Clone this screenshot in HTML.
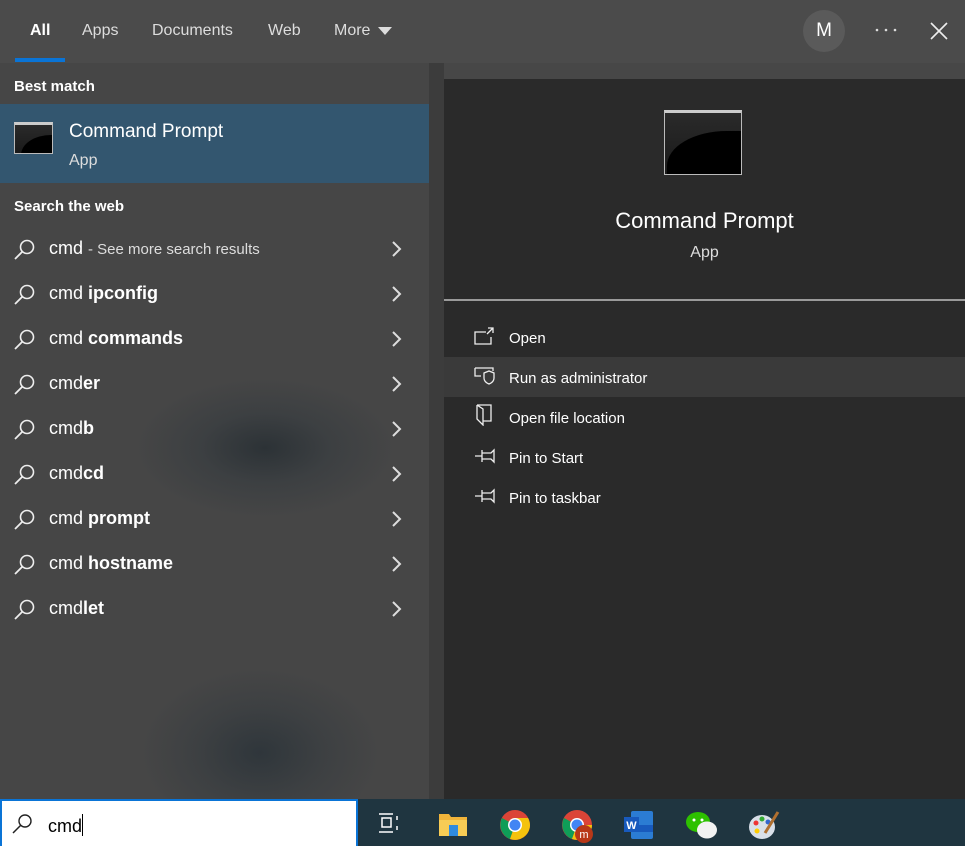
<!DOCTYPE html>
<html><head><meta charset="utf-8"><style>
*{margin:0;padding:0;box-sizing:border-box}
body{width:965px;height:846px;overflow:hidden;background:#474747;font-family:"Liberation Sans","DejaVu Sans",sans-serif;color:#fff;position:relative}
.abs{position:absolute}
.hdr{left:0;top:0;width:965px;height:63px;background:#4b4b4b}
.tab{position:absolute;top:22px;font-size:16px;color:#ddd}
.left{left:0;top:63px;width:429px;height:736px;background:radial-gradient(ellipse 130px 70px at 265px 385px,#2c3236 0%,rgba(58,62,65,0.8) 50%,rgba(71,71,71,0) 100%),radial-gradient(ellipse 120px 85px at 260px 690px,#2f363b 0%,rgba(58,62,65,0.7) 55%,rgba(71,71,71,0) 100%),#464646}
.gap{left:429px;top:63px;width:15px;height:736px;background:#3c3c3c}
.right{left:444px;top:79px;width:521px;height:720px;background:#2a2a2a}
.sec{font-size:15px;font-weight:bold;color:#fff}
.row{position:absolute;left:0;width:429px;height:45px;font-size:18px;color:#fff}
.row .t{position:absolute;left:49px;top:12px}
.row .t small{font-size:15px;color:#ddd}
.row svg.s{position:absolute;left:13px;top:12px}
.row svg.c{position:absolute;left:391px;top:15px}
.menu{position:absolute;left:444px;width:521px;height:40px;font-size:15px;color:#fff}
.menu .t{position:absolute;left:65px;top:13px}
.menu svg{position:absolute;left:30px;top:10px}
.cmdicon{background:linear-gradient(#2a2a2a,#1a1a1a);border:1px solid #bbb;border-top:3px solid #ccc;overflow:hidden}
</style></head><body>
<div class="abs hdr"></div>
<div class="tab" style="left:30px;color:#fff;font-weight:bold">All</div>
<div class="abs" style="left:15px;top:58px;width:50px;height:4px;background:#0a74d6"></div>
<div class="tab" style="left:82px">Apps</div>
<div class="tab" style="left:152px">Documents</div>
<div class="tab" style="left:268px">Web</div>
<div class="tab" style="left:334px">More</div>
<svg class="abs" style="left:377px;top:26px" width="16" height="10"><path d="M1 1h14L8 9z" fill="#ddd"/></svg>
<div class="abs" style="left:803px;top:10px;width:42px;height:42px;border-radius:50%;background:#5a5a5a;text-align:center;line-height:42px;font-size:19px">M</div>
<svg class="abs" style="left:875px;top:28px" width="22" height="4"><circle cx="2" cy="2" r="1.3" fill="#ddd"/><circle cx="11" cy="2" r="1.3" fill="#ddd"/><circle cx="20" cy="2" r="1.3" fill="#ddd"/></svg>
<svg class="abs" style="left:930px;top:22px" width="18" height="18"><path d="M1 1L17 17M17 1L1 17" stroke="#eee" stroke-width="1.6"/></svg>

<div class="abs left"></div>
<div class="abs gap"></div>
<div class="abs right"></div>

<div class="abs sec" style="left:14px;top:78px">Best match</div>
<div class="abs" style="left:0;top:104px;width:429px;height:79px;background:#33566f"></div>
<div class="abs cmdicon" style="left:14px;top:122px;width:39px;height:32px"><div style="position:absolute;left:6px;top:10px;width:60px;height:40px;border-radius:50% 0 0 0;background:#000"></div></div>
<div class="abs" style="left:69px;top:121px;font-size:19px">Command Prompt</div>
<div class="abs" style="left:69px;top:152px;font-size:16px;color:#ddd">App</div>
<div class="abs sec" style="left:14px;top:198px">Search the web</div>

<div class="row" style="top:226px"><svg class="s" width="24" height="24"><circle cx="14" cy="9" r="6.5" fill="none" stroke="#eee" stroke-width="1.6"/><path d="M9.5 13.5L2 21" stroke="#eee" stroke-width="1.8"/></svg><span class="t">cmd <small>- See more search results</small></span><svg class="c" width="12" height="16"><path d="M2 1l7 7-7 7" fill="none" stroke="#ddd" stroke-width="2"/></svg></div>
<div class="row" style="top:271px"><svg class="s" width="24" height="24"><circle cx="14" cy="9" r="6.5" fill="none" stroke="#eee" stroke-width="1.6"/><path d="M9.5 13.5L2 21" stroke="#eee" stroke-width="1.8"/></svg><span class="t">cmd <b>ipconfig</b></span><svg class="c" width="12" height="16"><path d="M2 1l7 7-7 7" fill="none" stroke="#ddd" stroke-width="2"/></svg></div>
<div class="row" style="top:316px"><svg class="s" width="24" height="24"><circle cx="14" cy="9" r="6.5" fill="none" stroke="#eee" stroke-width="1.6"/><path d="M9.5 13.5L2 21" stroke="#eee" stroke-width="1.8"/></svg><span class="t">cmd <b>commands</b></span><svg class="c" width="12" height="16"><path d="M2 1l7 7-7 7" fill="none" stroke="#ddd" stroke-width="2"/></svg></div>
<div class="row" style="top:361px"><svg class="s" width="24" height="24"><circle cx="14" cy="9" r="6.5" fill="none" stroke="#eee" stroke-width="1.6"/><path d="M9.5 13.5L2 21" stroke="#eee" stroke-width="1.8"/></svg><span class="t">cmd<b>er</b></span><svg class="c" width="12" height="16"><path d="M2 1l7 7-7 7" fill="none" stroke="#ddd" stroke-width="2"/></svg></div>
<div class="row" style="top:406px"><svg class="s" width="24" height="24"><circle cx="14" cy="9" r="6.5" fill="none" stroke="#eee" stroke-width="1.6"/><path d="M9.5 13.5L2 21" stroke="#eee" stroke-width="1.8"/></svg><span class="t">cmd<b>b</b></span><svg class="c" width="12" height="16"><path d="M2 1l7 7-7 7" fill="none" stroke="#ddd" stroke-width="2"/></svg></div>
<div class="row" style="top:451px"><svg class="s" width="24" height="24"><circle cx="14" cy="9" r="6.5" fill="none" stroke="#eee" stroke-width="1.6"/><path d="M9.5 13.5L2 21" stroke="#eee" stroke-width="1.8"/></svg><span class="t">cmd<b>cd</b></span><svg class="c" width="12" height="16"><path d="M2 1l7 7-7 7" fill="none" stroke="#ddd" stroke-width="2"/></svg></div>
<div class="row" style="top:496px"><svg class="s" width="24" height="24"><circle cx="14" cy="9" r="6.5" fill="none" stroke="#eee" stroke-width="1.6"/><path d="M9.5 13.5L2 21" stroke="#eee" stroke-width="1.8"/></svg><span class="t">cmd <b>prompt</b></span><svg class="c" width="12" height="16"><path d="M2 1l7 7-7 7" fill="none" stroke="#ddd" stroke-width="2"/></svg></div>
<div class="row" style="top:541px"><svg class="s" width="24" height="24"><circle cx="14" cy="9" r="6.5" fill="none" stroke="#eee" stroke-width="1.6"/><path d="M9.5 13.5L2 21" stroke="#eee" stroke-width="1.8"/></svg><span class="t">cmd <b>hostname</b></span><svg class="c" width="12" height="16"><path d="M2 1l7 7-7 7" fill="none" stroke="#ddd" stroke-width="2"/></svg></div>
<div class="row" style="top:586px"><svg class="s" width="24" height="24"><circle cx="14" cy="9" r="6.5" fill="none" stroke="#eee" stroke-width="1.6"/><path d="M9.5 13.5L2 21" stroke="#eee" stroke-width="1.8"/></svg><span class="t">cmd<b>let</b></span><svg class="c" width="12" height="16"><path d="M2 1l7 7-7 7" fill="none" stroke="#ddd" stroke-width="2"/></svg></div>

<div class="abs cmdicon" style="left:664px;top:110px;width:78px;height:65px"><div style="position:absolute;left:2px;top:18px;width:120px;height:70px;border-radius:50% 0 0 0;background:#000"></div></div>
<div class="abs" style="left:444px;top:208px;width:521px;text-align:center;font-size:22px">Command Prompt</div>
<div class="abs" style="left:444px;top:244px;width:521px;text-align:center;font-size:16px;color:#ddd">App</div>
<div class="abs" style="left:444px;top:299px;width:521px;height:2px;background:#9a9a9a"></div>

<div class="menu" style="top:317px"><svg width="22" height="20"><path d="M12 5H1v12h16V10M14 1h5v5M19 1l-6 6" fill="none" stroke="#eee" stroke-width="1.3"/></svg><span class="t">Open</span></div>
<div class="menu" style="top:357px;background:#3a3a3a"><svg width="24" height="20"><path d="M1 1h18v3M1 1v8h6" fill="none" stroke="#eee" stroke-width="1.3"/><path d="M10 6l5-2 5 2v5c0 3-2.5 5-5 6-2.5-1-5-3-5-6z" fill="none" stroke="#eee" stroke-width="1.3"/></svg><span class="t">Run as administrator</span></div>
<div class="menu" style="top:397px"><svg width="20" height="22" style="left:32px;top:7px"><path d="M1 1h14v16H7M1 1v14l6 6V5L1 1" fill="none" stroke="#eee" stroke-width="1.3"/></svg><span class="t">Open file location</span></div>
<div class="menu" style="top:437px"><svg width="24" height="18"><path d="M1 9h7M8 3v12M8 6h9l3-3v12l-3-3H8" fill="none" stroke="#eee" stroke-width="1.3"/></svg><span class="t">Pin to Start</span></div>
<div class="menu" style="top:477px"><svg width="24" height="18"><path d="M1 9h7M8 3v12M8 6h9l3-3v12l-3-3H8" fill="none" stroke="#eee" stroke-width="1.3"/></svg><span class="t">Pin to taskbar</span></div>

<div class="abs" style="left:0;top:799px;width:965px;height:47px;background:#1f3540"></div>
<div class="abs" style="left:0;top:799px;width:358px;height:47px;background:#fff;border:2px solid #0a74d6;border-bottom:none"></div>
<svg class="abs" style="left:10px;top:812px" width="24" height="24"><circle cx="15" cy="9" r="6" fill="none" stroke="#222" stroke-width="1.4"/><path d="M10.5 13.5L3 21" stroke="#222" stroke-width="1.5"/></svg>
<div class="abs" style="left:48px;top:814px;font-size:18px;color:#000">cmd<span style="display:inline-block;width:1px;height:22px;background:#000;vertical-align:-4px"></span></div>
<svg class="abs" style="left:378px;top:812px" width="24" height="22"><path d="M1 2h14M1 20h14M4 6h9v9H4zM19 4v4M19 14v4" fill="none" stroke="#fff" stroke-width="1.5"/></svg>
<svg class="abs" style="left:438px;top:811px" width="30" height="26"><path d="M1 3h10l2 3h16v19H1z" fill="#f0b43a"/><rect x="1" y="9" width="28" height="16" fill="#f7cc55"/><rect x="11" y="14" width="9" height="11" fill="#2f8be0"/></svg>
<svg class="abs" style="left:499px;top:809px" width="32" height="32"><circle cx="16" cy="16" r="15" fill="#db4437"/><path d="M16 16L3 9A15 15 0 0 0 11 30z" fill="#0f9d58"/><path d="M16 16L11 30A15 15 0 0 0 31 16z" fill="#f4c20d"/><path d="M16 16L31 16A15 15 0 0 0 29 9H16z" fill="#f4c20d"/><circle cx="16" cy="16" r="7" fill="#fff"/><circle cx="16" cy="16" r="5.5" fill="#4285f4"/></svg>
<svg class="abs" style="left:561px;top:809px" width="34" height="36"><circle cx="16" cy="16" r="15" fill="#db4437"/><path d="M16 16L3 9A15 15 0 0 0 11 30z" fill="#0f9d58"/><path d="M16 16L11 30A15 15 0 0 0 31 16z" fill="#f4c20d"/><circle cx="16" cy="16" r="7" fill="#fff"/><circle cx="16" cy="16" r="5.5" fill="#4285f4"/><circle cx="23" cy="25" r="9" fill="#b83818"/><text x="23" y="29" font-size="11" fill="#fff" text-anchor="middle" font-family="Liberation Sans">m</text></svg>
<svg class="abs" style="left:623px;top:810px" width="32" height="30"><rect x="8" y="1" width="22" height="28" rx="2" fill="#2b7cd3"/><rect x="8" y="15" width="22" height="7" fill="#185abd"/><rect x="1" y="7" width="15" height="15" fill="#185abd"/><text x="8.5" y="19" font-size="11" font-weight="bold" fill="#fff" text-anchor="middle" font-family="Liberation Sans">W</text></svg>
<svg class="abs" style="left:685px;top:809px" width="34" height="32"><ellipse cx="13" cy="13" rx="12" ry="10" fill="#2dc100"/><ellipse cx="22" cy="21" rx="10" ry="8.5" fill="#f2f2f2"/><circle cx="9" cy="11" r="1.5" fill="#fff"/><circle cx="17" cy="11" r="1.5" fill="#fff"/></svg>
<svg class="abs" style="left:747px;top:809px" width="34" height="32"><ellipse cx="15" cy="18" rx="13" ry="12" fill="#d8dfe8"/><circle cx="9" cy="14" r="2.5" fill="#e33"/><circle cx="15" cy="10" r="2.5" fill="#3a3"/><circle cx="21" cy="13" r="2.5" fill="#36c"/><circle cx="10" cy="22" r="2.5" fill="#fc0"/><path d="M18 24L31 3" stroke="#b07030" stroke-width="3"/></svg>
</body></html>
